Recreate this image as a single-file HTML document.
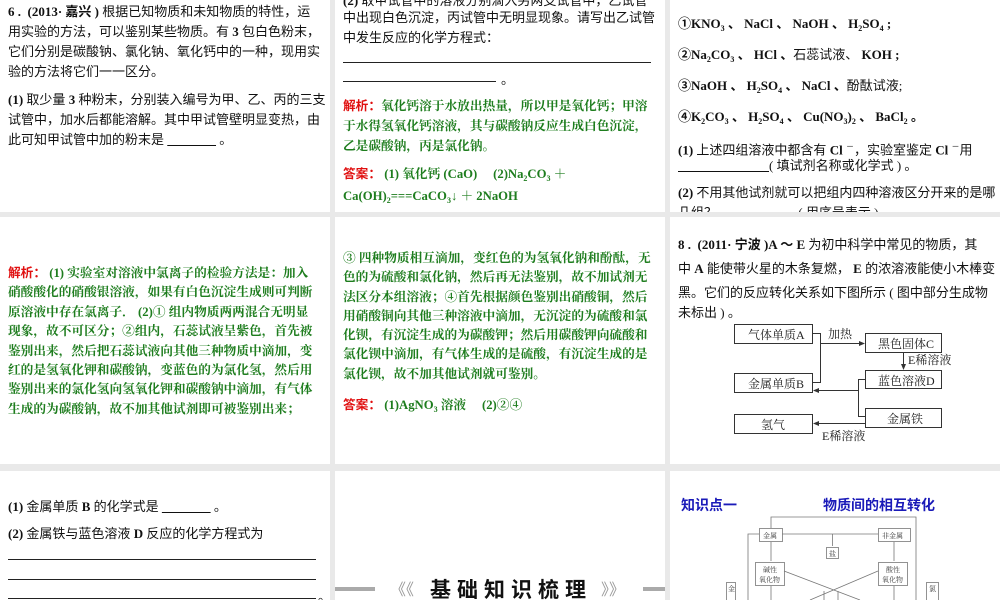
<!DOCTYPE html>
<html><head><meta charset="utf-8"><style>
body{margin:0;width:1000px;height:600px;background:#e9e9e9;position:relative;overflow:hidden;font-family:"Liberation Serif","Noto Serif CJK SC",serif;}
.p{position:absolute;background:#fff;overflow:hidden}
.t{position:absolute;font-size:13px;line-height:20px;white-space:nowrap;color:#111;font-family:"Liberation Serif","Noto Sans CJK SC",sans-serif}
.b{font-weight:bold}
.g{color:#1e7d1e;font-family:"Liberation Serif","Noto Serif CJK SC",serif;font-weight:bold;font-size:12.7px;letter-spacing:0}
.r{color:#e01010;font-weight:bold;font-family:"Liberation Sans","Noto Sans CJK SC",sans-serif}
sub{font-size:8px;vertical-align:-3px}
.ln{position:absolute;border-top:1px solid #222;height:0}
</style></head><body>
<!-- row1 -->
<div class="p" style="left:0;top:0;width:330px;height:212px">
<div class="t" style="left:8px;top:2px"><b>6 .&nbsp; (2013· 嘉兴 )</b> 根据已知物质和未知物质的特性，运</div>
<div class="t" style="left:8px;top:22px">用实验的方法，可以鉴别某些物质。有 <b>3</b> 包白色粉末，</div>
<div class="t" style="left:8px;top:42px">它们分别是碳酸钠、氯化钠、氧化钙中的一种，现用实</div>
<div class="t" style="left:8px;top:62px">验的方法将它们一一区分。</div>
<div class="t" style="left:8px;top:90px"><b>(1)</b> 取少量 <b>3</b> 种粉末，分别装入编号为甲、乙、丙的三支</div>
<div class="t" style="left:8px;top:110px">试管中，加水后都能溶解。其中甲试管壁明显变热，由</div>
<div class="t" style="left:8px;top:130px">此可知甲试管中加的粉末是 <u>&nbsp;&nbsp;&nbsp;&nbsp;&nbsp;&nbsp;&nbsp;&nbsp;&nbsp;&nbsp;&nbsp;&nbsp;&nbsp;&nbsp;&nbsp;</u> 。</div>
</div>
<div class="p" style="left:335px;top:0;width:330px;height:212px">
<div class="t" style="left:8px;top:-9px"><b>(2)</b> 取甲试管中的溶液分别滴入另两支试管中，乙试管</div>
<div class="t" style="left:8px;top:8px">中出现白色沉淀，丙试管中无明显现象。请写出乙试管</div>
<div class="t" style="left:8px;top:28px">中发生反应的化学方程式：</div>
<div class="ln" style="left:8px;top:62px;width:308px"></div>
<div class="ln" style="left:8px;top:81px;width:153px"></div>
<div class="t" style="left:166px;top:70px">。</div>
<div class="t g" style="left:8px;top:96px"><span class="r">解析：</span>氧化钙溶于水放出热量，所以甲是氧化钙；甲溶</div>
<div class="t g" style="left:8px;top:116px">于水得氢氧化钙溶液，其与碳酸钠反应生成白色沉淀，</div>
<div class="t g" style="left:8px;top:136px">乙是碳酸钠，丙是氯化钠。</div>
<div class="t g" style="left:8px;top:164px"><span class="r">答案：</span> (1) 氧化钙 (CaO)&nbsp;&nbsp;&nbsp;&nbsp; (2)Na<sub>2</sub>CO<sub>3</sub> ＋</div>
<div class="t g" style="left:8px;top:186px">Ca(OH)<sub>2</sub>===CaCO<sub>3</sub>↓ ＋ 2NaOH</div>
</div>
<div class="p" style="left:670px;top:0;width:330px;height:212px">
<div class="t b" style="left:8px;top:14px">①KNO<sub>3</sub> 、 NaCl 、 NaOH 、 H<sub>2</sub>SO<sub>4</sub> ;</div>
<div class="t b" style="left:8px;top:45px">②Na<sub>2</sub>CO<sub>3</sub> 、 HCl 、<span style="font-weight:normal">石蕊试液、</span> KOH ;</div>
<div class="t b" style="left:8px;top:76px">③NaOH 、 H<sub>2</sub>SO<sub>4</sub> 、 NaCl 、<span style="font-weight:normal">酚酞试液;</span></div>
<div class="t b" style="left:8px;top:107px">④K<sub>2</sub>CO<sub>3</sub> 、 H<sub>2</sub>SO<sub>4</sub> 、 Cu(NO<sub>3</sub>)<sub>2</sub> 、 BaCl<sub>2</sub> 。</div>
<div class="t" style="left:8px;top:137px"><b>(1)</b> 上述四组溶液中都含有 <b>Cl</b> <sup style="font-size:8px">－</sup>，实验室鉴定 <b>Cl</b> <sup style="font-size:8px">－</sup>用</div>
<div class="t" style="left:8px;top:156px"><u>&nbsp;&nbsp;&nbsp;&nbsp;&nbsp;&nbsp;&nbsp;&nbsp;&nbsp;&nbsp;&nbsp;&nbsp;&nbsp;&nbsp;&nbsp;&nbsp;&nbsp;&nbsp;&nbsp;&nbsp;&nbsp;&nbsp;&nbsp;&nbsp;&nbsp;&nbsp;&nbsp;&nbsp;</u>( 填试剂名称或化学式 ) 。</div>
<div class="t" style="left:8px;top:183px"><b>(2)</b> 不用其他试剂就可以把组内四种溶液区分开来的是哪</div>
<div class="t" style="left:8px;top:203px">几组？&nbsp;&nbsp;&nbsp;&nbsp;&nbsp;&nbsp;&nbsp;&nbsp;&nbsp;&nbsp;&nbsp;&nbsp;&nbsp;&nbsp;&nbsp;&nbsp;&nbsp;&nbsp;&nbsp;&nbsp;&nbsp;&nbsp;&nbsp;&nbsp; ( 用序号表示 )</div>
</div>
<!-- row2 -->
<div class="p" style="left:0;top:217px;width:330px;height:247px">
<div class="t g" style="left:8px;top:46px"><span class="r">解析：</span> (1) 实验室对溶液中氯离子的检验方法是：加入</div>
<div class="t g" style="left:8px;top:65px">硝酸酸化的硝酸银溶液，如果有白色沉淀生成则可判断</div>
<div class="t g" style="left:8px;top:85px">原溶液中存在氯离子． (2)① 组内物质两两混合无明显</div>
<div class="t g" style="left:8px;top:104px">现象，故不可区分；②组内，石蕊试液呈紫色，首先被</div>
<div class="t g" style="left:8px;top:124px">鉴别出来，然后把石蕊试液向其他三种物质中滴加，变</div>
<div class="t g" style="left:8px;top:143px">红的是氢氧化钾和碳酸钠，变蓝色的为氯化氢，然后用</div>
<div class="t g" style="left:8px;top:162px">鉴别出来的氯化氢向氢氧化钾和碳酸钠中滴加，有气体</div>
<div class="t g" style="left:8px;top:182px">生成的为碳酸钠，故不加其他试剂即可被鉴别出来；</div>
</div>
<div class="p" style="left:335px;top:217px;width:330px;height:247px">
<div class="t g" style="left:8px;top:31px">③ 四种物质相互滴加，变红色的为氢氧化钠和酚酞，无</div>
<div class="t g" style="left:8px;top:50px">色的为硫酸和氯化钠，然后再无法鉴别，故不加试剂无</div>
<div class="t g" style="left:8px;top:70px">法区分本组溶液；④首先根据颜色鉴别出硝酸铜，然后</div>
<div class="t g" style="left:8px;top:89px">用硝酸铜向其他三种溶液中滴加，无沉淀的为硫酸和氯</div>
<div class="t g" style="left:8px;top:108px">化钡，有沉淀生成的为碳酸钾；然后用碳酸钾向硫酸和</div>
<div class="t g" style="left:8px;top:127px">氯化钡中滴加，有气体生成的是硫酸，有沉淀生成的是</div>
<div class="t g" style="left:8px;top:147px">氯化钡，故不加其他试剂就可鉴别。</div>
<div class="t g" style="left:8px;top:178px"><span class="r">答案：</span> (1)AgNO<sub>3</sub> 溶液&nbsp;&nbsp;&nbsp;&nbsp; (2)②④</div>
</div>
<div class="p" style="left:670px;top:217px;width:330px;height:247px">
<div class="t" style="left:8px;top:18px"><b>8 .&nbsp; (2011· 宁波 )A ～ E</b> 为初中科学中常见的物质，其</div>
<div class="t" style="left:8px;top:42px">中 <b>A</b> 能使带火星的木条复燃， <b>E</b> 的浓溶液能使小木棒变</div>
<div class="t" style="left:8px;top:66px">黑。它们的反应转化关系如下图所示 ( 图中部分生成物</div>
<div class="t" style="left:8px;top:86px">未标出 ) 。</div>
<svg style="position:absolute;left:-5px;top:13px" width="330" height="230" font-family="Liberation Serif,Noto Serif CJK SC,serif" font-size="12" fill="#222">
<g fill="none" stroke="#333" stroke-width="1">
<rect x="69.5" y="94.5" width="78" height="19"/>
<rect x="200.5" y="103.5" width="76" height="19"/>
<rect x="200.5" y="140.5" width="76" height="18"/>
<rect x="69.5" y="143.5" width="78" height="19"/>
<rect x="200.5" y="178.5" width="76" height="19"/>
<rect x="69.5" y="184.5" width="78" height="19"/>
<path d="M147 103.5H155.5V152.5H147M155.5 113.5H196M238.5 122.5V136M200 149.5H193.5V186.5H200M193.5 160.5H152M200 193.5H152"/>
</g>
<g fill="#333"><path d="M200 113.5l-6-2.5v5z"/><path d="M238.5 140l-2.5-6h5z"/><path d="M148 160.5l6-2.5v5z"/><path d="M148 193.5l6-2.5v5z"/></g>
<text x="83" y="109">气体单质A</text><text x="213" y="118">黑色固体C</text><text x="213" y="155">蓝色溶液D</text>
<text x="83" y="158">金属单质B</text><text x="222" y="193">金属铁</text><text x="96" y="199">氢气</text>
<text x="163" y="108">加热</text><text x="243" y="134">E稀溶液</text><text x="157" y="210">E稀溶液</text>
</svg>
</div>
<!-- row3 -->
<div class="p" style="left:0;top:471px;width:330px;height:129px">
<div class="t" style="left:8px;top:26px"><b>(1)</b> 金属单质 <b>B</b> 的化学式是 <u>&nbsp;&nbsp;&nbsp;&nbsp;&nbsp;&nbsp;&nbsp;&nbsp;&nbsp;&nbsp;&nbsp;&nbsp;&nbsp;&nbsp;&nbsp;</u> 。</div>
<div class="t" style="left:8px;top:53px"><b>(2)</b> 金属铁与蓝色溶液 <b>D</b> 反应的化学方程式为</div>
<div class="ln" style="left:8px;top:88px;width:308px"></div>
<div class="ln" style="left:8px;top:108px;width:308px"></div>
<div class="ln" style="left:8px;top:127px;width:308px"></div>
<div class="t" style="left:318px;top:116px">。</div>
</div>
<div class="p" style="left:335px;top:471px;width:330px;height:129px">
<div style="position:absolute;left:0;top:116px;width:40px;height:4px;background:#aaa"></div>
<div style="position:absolute;left:308px;top:116px;width:22px;height:4px;background:#aaa"></div>
<div style="position:absolute;left:55px;top:105px;font-size:16px;color:#999;font-family:'Liberation Sans','Noto Sans CJK SC',sans-serif">《《</div>
<div style="position:absolute;left:95px;top:103px;font-size:21px;font-weight:bold;letter-spacing:6px;font-family:'Liberation Sans','Noto Sans CJK SC',sans-serif;color:#111">基础知识梳理</div>
<div style="position:absolute;left:266px;top:105px;font-size:16px;color:#999;font-family:'Liberation Sans','Noto Sans CJK SC',sans-serif">》》</div>
</div>
<div class="p" style="left:670px;top:471px;width:330px;height:129px">
<div style="position:absolute;left:11px;top:24px;font-size:14px;font-weight:bold;color:#1a1ab8;font-family:'Liberation Sans','Noto Sans CJK SC',sans-serif">知识点一</div>
<div style="position:absolute;left:153px;top:24px;font-size:14px;font-weight:bold;color:#1a1ab8;font-family:'Liberation Sans','Noto Sans CJK SC',sans-serif">物质间的相互转化</div>
<svg style="position:absolute;left:0;top:0" width="330" height="129" font-family="Liberation Serif,Noto Serif CJK SC,serif" font-size="7" fill="#444">
<g fill="none" stroke="#777" stroke-width="0.8">
<path d="M101 57V46H246V129"/>
<rect x="89.5" y="57.5" width="23" height="13"/>
<rect x="208.5" y="57.5" width="32" height="13"/>
<rect x="156.5" y="76.5" width="12" height="11"/>
<rect x="85.5" y="91.5" width="29" height="23"/>
<rect x="208.5" y="91.5" width="29" height="23"/>
<rect x="56.5" y="111.5" width="9" height="20"/>
<rect x="256.5" y="111.5" width="12" height="20"/>
<path d="M89 63H78V129M112 63H208M162.5 63V75M101 71V90M224 71V90M101 115V129M224 115V129M114 100L190 129M208 100L140 129M154 120V129M168 120V129"/>
</g>
<text x="93" y="67">金属</text><text x="212" y="67">非金属</text><text x="159" y="85">盐</text>
<text x="93" y="101">碱性</text><text x="89" y="111">氧化物</text><text x="216" y="101">酸性</text><text x="212" y="111">氧化物</text>
<text x="58" y="120">金</text><text x="259" y="120">氯</text>
</svg>
</div>
</body></html>
